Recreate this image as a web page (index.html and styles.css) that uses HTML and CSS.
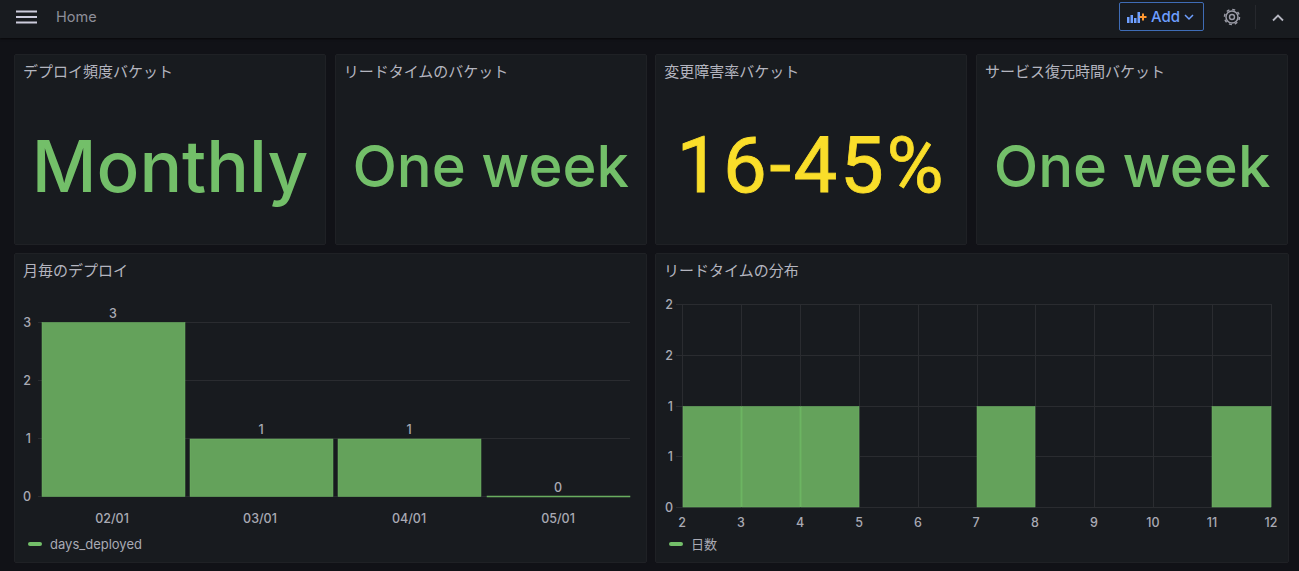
FILE: index.html
```html
<!DOCTYPE html>
<html lang="ja">
<head>
  <meta charset="UTF-8" />
  <meta name="viewport" content="width=device-width, initial-scale=1.0"/>
  <title>Home</title>
  <link rel="stylesheet" href="styles.css">
</head>
<body>
  <header class="topbar">
    <svg class="menu" width="21" height="14" viewBox="0 0 21 14">
      <path d="M0 1.500h21M0 7h21M0 12.500h21" stroke="#ccccdc" stroke-width="2"/>
    </svg>
    <span class="crumb">Home</span>
    <div class="actions">
      <button class="add">
        <svg width="21" height="14" viewBox="0 0 21 14">
          <path d="M1 7h2.500v6H1zM4.500 5h2.500v8H4.500zM8 8h2.500v5H8zM11.500 2h2.500v11h-2.500z" fill="#6e9fff"/>
          <path d="M17 3.500v7M13.500 7h7" stroke="#ff9830" stroke-width="2"/>
        </svg>
        <span>Add</span>
        <svg width="10" height="8" viewBox="0 0 10 8">
          <path d="M1 2l4 4 4-4" fill="none" stroke="#6e9fff" stroke-width="1.500"/>
        </svg>
      </button>
      <svg class="gear" width="18" height="18" viewBox="0 0 18 18">
        <circle cx="9" cy="9" r="6" fill="none" stroke="#9a9ba6" stroke-width="1.500"/>
        <circle cx="9" cy="9" r="7.500" fill="none" stroke="#9a9ba6" stroke-width="1.500" stroke-dasharray="3 2.890"/>
        <circle cx="9" cy="9" r="2.500" fill="none" stroke="#9a9ba6" stroke-width="1.400"/>
      </svg>
      <span class="sep"></span>
      <svg class="collapse" width="12" height="8" viewBox="0 0 12 8">
        <path d="M1 6.500l5-5 5 5" fill="none" stroke="#b5b6c0" stroke-width="1.800"/>
      </svg>
    </div>
  </header>

  <main class="dash">
    <section class="stats">
      <div class="panel stat">
        <h2>デプロイ頻度バケット</h2>
        <div class="value monthly green">Monthly</div>
      </div>
      <div class="panel stat">
        <h2>リードタイムのバケット</h2>
        <div class="value green">One week</div>
      </div>
      <div class="panel stat">
        <h2>変更障害率バケット</h2>
        <div class="value rate yellow">16-45%</div>
      </div>
      <div class="panel stat">
        <h2>サービス復元時間バケット</h2>
        <div class="value green">One week</div>
      </div>
    </section>

    <section class="charts">
      <div class="panel chart">
        <h2>月毎のデプロイ</h2>
        <svg class="plot" width="632" height="238" viewBox="14 292 632 238">
          <g class="grid">
            <path d="M38 322.500h592M38 380.500h592M38 438.500h592M38 496.500h592"/>
          </g>
          <g class="bars">
            <rect x="42" y="322.500" width="143" height="174"/>
            <rect x="190" y="439" width="143" height="57.500"/>
            <rect x="338" y="439" width="143" height="57.500"/>
            <rect x="487" y="496" width="143" height="1"/>
          </g>
          <g class="labels end">
            <text x="31" y="327">3</text>
            <text x="31" y="385">2</text>
            <text x="31" y="443">1</text>
            <text x="31" y="501">0</text>
          </g>
          <g class="labels mid">
            <text x="113" y="318">3</text>
            <text x="261" y="434">1</text>
            <text x="409" y="434">1</text>
            <text x="558" y="492">0</text>
            <text x="112" y="523">02/01</text>
            <text x="260" y="523">03/01</text>
            <text x="409" y="523">04/01</text>
            <text x="558" y="523">05/01</text>
          </g>
        </svg>
        <div class="legend"><i></i>days_deployed</div>
      </div>

      <div class="panel chart">
        <h2>リードタイムの分布</h2>
        <svg class="plot" width="633" height="238" viewBox="655 292 633 238">
          <g class="grid">
            <path d="M676 304.500h595M676 355.500h595M676 406.500h595M676 456.500h595M676 507.500h595"/>
            <path d="M682.500 304v203M741.500 304v203M800.500 304v203M859.500 304v203M918.500 304v203M977.500 304v203M1035.500 304v203M1094.500 304v203M1153.500 304v203M1212.500 304v203M1271.500 304v203"/>
          </g>
          <g class="bars">
            <rect x="683" y="406.500" width="58" height="100.500"/>
            <rect x="742" y="406.500" width="58" height="100.500"/>
            <rect x="801" y="406.500" width="58" height="100.500"/>
            <rect x="977" y="406.500" width="58" height="100.500"/>
            <rect x="1212" y="406.500" width="59" height="100.500"/>
          </g>
          <path class="seam" d="M741.500 406.500v100.500M800.500 406.500v100.500"/>
          <g class="labels end">
            <text x="673" y="309">2</text>
            <text x="673" y="360">2</text>
            <text x="673" y="411">1</text>
            <text x="673" y="461">1</text>
            <text x="673" y="512">0</text>
          </g>
          <g class="labels mid">
            <text x="682" y="527">2</text>
            <text x="741" y="527">3</text>
            <text x="800" y="527">4</text>
            <text x="859" y="527">5</text>
            <text x="918" y="527">6</text>
            <text x="976" y="527">7</text>
            <text x="1035" y="527">8</text>
            <text x="1094" y="527">9</text>
            <text x="1153" y="527">10</text>
            <text x="1212" y="527">11</text>
            <text x="1271" y="527">12</text>
          </g>
        </svg>
        <div class="legend"><i></i>日数</div>
      </div>
    </section>
  </main>
</body>
</html>
```

FILE: styles.css
```css
:root {
  --bg: #111217;
  --panel: #181b1f;
  --text: #b4b5bf;
  --green: #73bf69;
  --yellow: #fade2a;
  --blue: #6e9fff;
}
* {
  box-sizing: border-box;
}
html, body {
  height: 100%;
}
body {
  margin: 0;
  overflow: hidden;
  background-color: var(--bg);
  color: var(--text);
  font-family: Inter, "Noto Sans CJK JP", sans-serif;
}
.topbar {
  display: flex;
  align-items: center;
  height: 38px;
  padding: 0 15px 5px 16px;
  background-color: #181b1f;
  box-shadow: 0 1px 2px rgba(0,0,0,0.6);
}
.menu {
  flex: none;
  margin-top: 1px;
}
.crumb {
  margin-left: 19px;
  font-size: 14.500px;
  color: #8e8f99;
}
.actions {
  display: flex;
  align-items: center;
  margin-left: auto;
}
.add {
  display: flex;
  align-items: center;
  gap: 4px;
  width: 85px;
  height: 29px;
  margin: 0;
  padding: 0 6px;
  background-color: transparent;
  border: 1px solid #3f6cb5;
  border-radius: 2px;
  color: var(--blue);
  font-family: inherit;
  font-size: 15px;
  font-weight: 500;
}
.gear {
  margin-left: 19px;
}
.sep {
  width: 1px;
  height: 24px;
  margin: 0 16px 0 14px;
  background-color: #26282d;
}
.collapse {
  margin-top: 2px;
}
.dash {
  display: flex;
  flex-direction: column;
  gap: 8px;
  padding: 16px 11px 0 14px;
}
.stats {
  display: flex;
  gap: 8.670px;
}
.charts {
  display: flex;
  gap: 8px;
}
.panel {
  flex: 1;
  background-color: var(--panel);
  border: 1px solid #1f2125;
  border-radius: 2px;
}
.panel h2 {
  margin: 0;
  padding: 7px 8px 0;
  font-size: 15px;
  line-height: 20px;
  font-weight: 400;
  color: var(--text);
}
.stat {
  height: 191px;
}
.value {
  margin-top: 42px;
  text-align: center;
  line-height: 84px;
  font-weight: 500;
  font-size: 58px;
}
.value.monthly {
  font-size: 71px;
}
.value.rate {
  font-family: Roboto, sans-serif;
  font-weight: 400;
  font-size: 78px;
  letter-spacing: 2.600px;
  -webkit-text-stroke: 0.800px var(--yellow);
}
.green {
  color: var(--green);
}
.yellow {
  color: var(--yellow);
}
.chart {
  height: 310px;
}
.plot {
  display: block;
  margin: 11px 0 0 -1px;
}
.grid path {
  fill: none;
  stroke: #2a2c30;
  stroke-width: 1;
}
.bars rect {
  fill: #64a25b;
  stroke: #6fb765;
  stroke-width: 0.500;
}
.seam {
  fill: none;
  stroke: #6cb562;
  stroke-width: 1.500;
}
.labels text {
  font-size: 12.500px;
  font-weight: 500;
  fill: #a9aab4;
}
.labels.end text {
  text-anchor: end;
}
.labels.mid text {
  text-anchor: middle;
}
.legend {
  display: flex;
  align-items: center;
  gap: 8px;
  padding: 6px 0 0 13px;
  font-size: 13px;
  line-height: 16px;
  color: #a9aab4;
}
.legend i {
  width: 14px;
  height: 4px;
  border-radius: 2px;
  background-color: var(--green);
}
```
